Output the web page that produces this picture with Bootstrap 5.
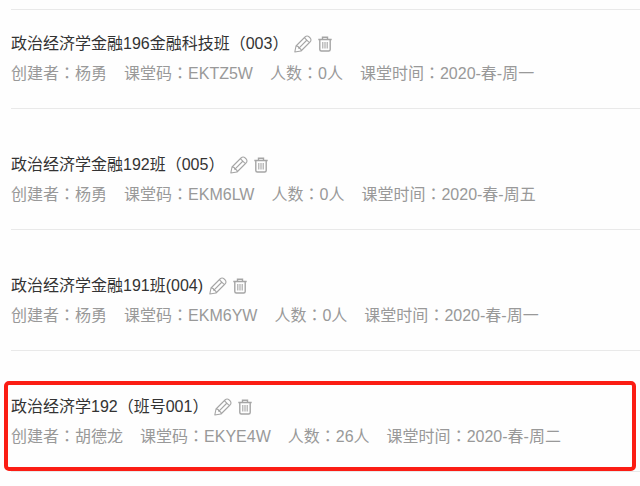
<!DOCTYPE html>
<html lang="zh-CN">
<head>
<meta charset="utf-8">
<meta name="viewport" content="width=device-width, initial-scale=1">
<title>课堂列表</title>
<link href="https://cdn.jsdelivr.net/npm/bootstrap@5.3.0/dist/css/bootstrap.min.css" rel="stylesheet">
<style>
body { font-family: "Liberation Sans", "Noto Sans CJK SC", sans-serif; font-size: 16px; background: #fefefe; }
.course-list { padding: 9px 0 0 11px; }
.course-item { padding: 43px 0 22px; border-bottom: 1px solid #e9e9e9; }
.course-item:first-child { padding-top: 21px; border-top: 1px solid #e9e9e9; }
.course-head { column-gap: 6px; }
.course-title { font-size: 16px; line-height: 26px; font-weight: 400; color: #333; }
.course-meta { line-height: 24px; margin-top: 5px; column-gap: 17px; color: #999; }
.wide { font-family: "Noto Sans CJK TC", sans-serif; line-height: 1; }
.tool { color: #a5a5a5; line-height: 1; }
.tool svg { display: block; fill: none; stroke: currentColor; }
/* red frame laid over the selected course */
.course-item.marked::after { content: ""; position: absolute; top: 30px; right: 4px; bottom: 0; left: -7px; border: 4px solid #fb1d14; border-radius: 5px; pointer-events: none; }
</style>
<script src="https://cdn.jsdelivr.net/npm/bootstrap@5.3.0/dist/js/bootstrap.bundle.min.js"></script>
</head>
<body>
<svg class="d-none" aria-hidden="true">
  <symbol id="pencil" viewBox="0 0 18 18">
    <path d="M.8 17 2 11 11 2Q13 .2 15 1.800L16.200 3Q17.800 5 16 7L7 16ZM2 11Q4.800 10.800 4.700 13.300Q7.200 13.200 7 16M4.700 13.300 12.500 5.500M10.300 2.700 15.300 7.700" stroke-width="1.1" stroke-linejoin="round"/>
  </symbol>
  <symbol id="trash" viewBox="0 0 14 16">
    <path d="M.3 3.500H13.700M4.500 3V1.200H9.500V3M1.800 4V13.500Q1.800 15 3.300 15H10.700Q12.200 15 12.200 13.500V4" stroke-width="1.400"/>
    <path d="M4.800 6V12.500M7 6V12.500M9.200 6V12.500" stroke-width="1.100"/>
  </symbol>
</svg>
<main class="course-list">
  <article class="course-item">
    <div class="course-head d-flex align-items-center">
      <h2 class="course-title mb-0">政治经济学金融196金融科技班<span class="wide" lang="zh-TW">（</span>003<span class="wide" lang="zh-TW">）</span></h2>
      <button type="button" class="tool btn border-0 p-0" aria-label="编辑"><svg width="18" height="18"><use href="#pencil"/></svg></button>
      <button type="button" class="tool btn border-0 p-0" aria-label="删除"><svg width="14" height="16"><use href="#trash"/></svg></button>
    </div>
    <div class="course-meta d-flex flex-wrap"><span>创建者<span class="wide" lang="zh-TW">：</span>杨勇</span><span>课堂码<span class="wide" lang="zh-TW">：</span>EKTZ5W</span><span>人数<span class="wide" lang="zh-TW">：</span>0人</span><span>课堂时间<span class="wide" lang="zh-TW">：</span>2020-春-周一</span></div>
  </article>
  <article class="course-item">
    <div class="course-head d-flex align-items-center">
      <h2 class="course-title mb-0">政治经济学金融192班<span class="wide" lang="zh-TW">（</span>005<span class="wide" lang="zh-TW">）</span></h2>
      <button type="button" class="tool btn border-0 p-0" aria-label="编辑"><svg width="18" height="18"><use href="#pencil"/></svg></button>
      <button type="button" class="tool btn border-0 p-0" aria-label="删除"><svg width="14" height="16"><use href="#trash"/></svg></button>
    </div>
    <div class="course-meta d-flex flex-wrap"><span>创建者<span class="wide" lang="zh-TW">：</span>杨勇</span><span>课堂码<span class="wide" lang="zh-TW">：</span>EKM6LW</span><span>人数<span class="wide" lang="zh-TW">：</span>0人</span><span>课堂时间<span class="wide" lang="zh-TW">：</span>2020-春-周五</span></div>
  </article>
  <article class="course-item">
    <div class="course-head d-flex align-items-center">
      <h2 class="course-title mb-0">政治经济学金融191班(004)</h2>
      <button type="button" class="tool btn border-0 p-0" aria-label="编辑"><svg width="18" height="18"><use href="#pencil"/></svg></button>
      <button type="button" class="tool btn border-0 p-0" aria-label="删除"><svg width="14" height="16"><use href="#trash"/></svg></button>
    </div>
    <div class="course-meta d-flex flex-wrap"><span>创建者<span class="wide" lang="zh-TW">：</span>杨勇</span><span>课堂码<span class="wide" lang="zh-TW">：</span>EKM6YW</span><span>人数<span class="wide" lang="zh-TW">：</span>0人</span><span>课堂时间<span class="wide" lang="zh-TW">：</span>2020-春-周一</span></div>
  </article>
  <article class="course-item marked position-relative">
    <div class="course-head d-flex align-items-center">
      <h2 class="course-title mb-0">政治经济学192<span class="wide" lang="zh-TW">（</span>班号001<span class="wide" lang="zh-TW">）</span></h2>
      <button type="button" class="tool btn border-0 p-0" aria-label="编辑"><svg width="18" height="18"><use href="#pencil"/></svg></button>
      <button type="button" class="tool btn border-0 p-0" aria-label="删除"><svg width="14" height="16"><use href="#trash"/></svg></button>
    </div>
    <div class="course-meta d-flex flex-wrap"><span>创建者<span class="wide" lang="zh-TW">：</span>胡德龙</span><span>课堂码<span class="wide" lang="zh-TW">：</span>EKYE4W</span><span>人数<span class="wide" lang="zh-TW">：</span>26人</span><span>课堂时间<span class="wide" lang="zh-TW">：</span>2020-春-周二</span></div>
  </article>
</main>
</body>
</html>
